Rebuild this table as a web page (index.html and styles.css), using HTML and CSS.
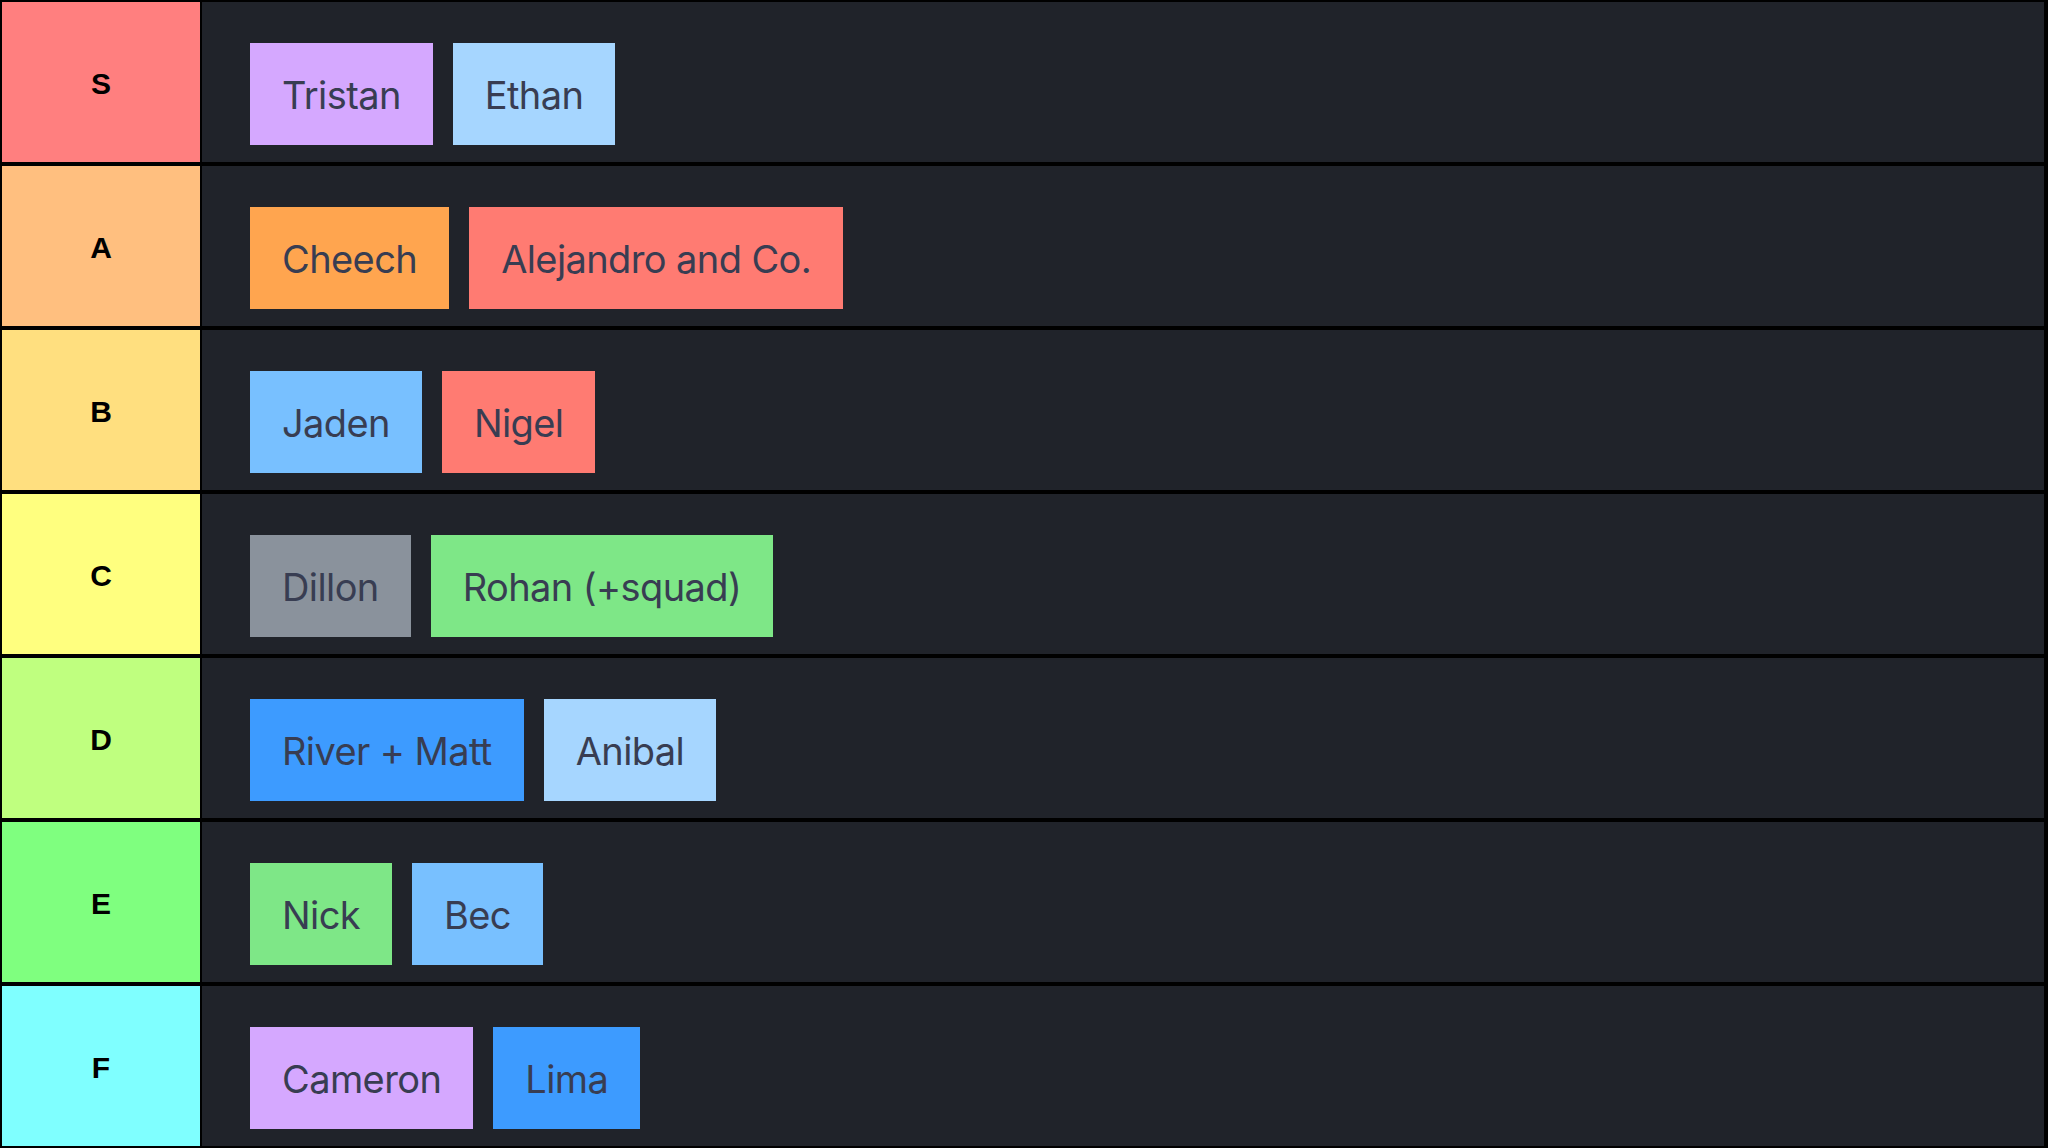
FILE: index.html
```html
<!DOCTYPE html>
<html lang="en">
<head>
<meta charset="utf-8">
<title>Tier List</title>
<link rel="stylesheet" href="styles.css">
</head>
<body>
<div class="tier-list">
  <div class="tier">
    <div class="tier-label tier-s">S</div>
    <div class="tier-items">
      <div class="item c-purple">Tristan</div>
      <div class="item c-skyblue">Ethan</div>
    </div>
  </div>
  <div class="tier">
    <div class="tier-label tier-a">A</div>
    <div class="tier-items">
      <div class="item c-orange">Cheech</div>
      <div class="item c-red">Alejandro and Co.</div>
    </div>
  </div>
  <div class="tier">
    <div class="tier-label tier-b">B</div>
    <div class="tier-items">
      <div class="item c-blue">Jaden</div>
      <div class="item c-red">Nigel</div>
    </div>
  </div>
  <div class="tier">
    <div class="tier-label tier-c">C</div>
    <div class="tier-items">
      <div class="item c-gray">Dillon</div>
      <div class="item c-green">Rohan (+squad)</div>
    </div>
  </div>
  <div class="tier">
    <div class="tier-label tier-d">D</div>
    <div class="tier-items">
      <div class="item c-deepblue">River + Matt</div>
      <div class="item c-skyblue">Anibal</div>
    </div>
  </div>
  <div class="tier">
    <div class="tier-label tier-e">E</div>
    <div class="tier-items">
      <div class="item c-green">Nick</div>
      <div class="item c-blue">Bec</div>
    </div>
  </div>
  <div class="tier">
    <div class="tier-label tier-f">F</div>
    <div class="tier-items">
      <div class="item c-purple">Cameron</div>
      <div class="item c-deepblue">Lima</div>
    </div>
  </div>
</div>
</body>
</html>
```
FILE: styles.css
```css
html, body {
  margin: 0;
  padding: 0;
  background: #000;
}

body {
  width: 2048px;
  height: 1148px;
  overflow: hidden;
}

.tier-list {
  display: flex;
  flex-direction: column;
  padding-right: 2px;
}

.tier {
  display: flex;
  height: 160px;
  border: 2px solid #000;
  gap: 2px;
}

.tier-label {
  width: 198px;
  flex: none;
  display: flex;
  align-items: center;
  justify-content: center;
  padding-top: 4px;
  box-sizing: border-box;
  font-family: "Liberation Sans", Arial, sans-serif;
  font-weight: bold;
  font-size: 30px;
  color: #000;
}

.tier-s { background: #ff7f7f; }
.tier-a { background: #ffbf7f; }
.tier-b { background: #ffdf7f; }
.tier-c { background: #ffff7f; }
.tier-d { background: #bfff7f; }
.tier-e { background: #7fff7f; }
.tier-f { background: #7fffff; }

.tier-items {
  flex: 1;
  background: #20232a;
  display: flex;
  align-items: flex-start;
  gap: 20px;
  padding: 41px 0 0 48px;
}

.item {
  font-family: Inter, "Noto Sans", sans-serif;
  font-size: 38px;
  line-height: 60px;
  padding: 22px 32px 20px;
  color: #383d52;
  white-space: nowrap;
  letter-spacing: -0.6px;
}

.c-purple { background: #d5a8ff; }
.c-skyblue { background: #a6d6ff; }
.c-orange { background: #ffa54f; }
.c-red { background: #ff7b72; }
.c-blue { background: #78c0ff; }
.c-gray { background: #8a929c; }
.c-green { background: #7ee787; }
.c-deepblue { background: #3d9bff; }
```
